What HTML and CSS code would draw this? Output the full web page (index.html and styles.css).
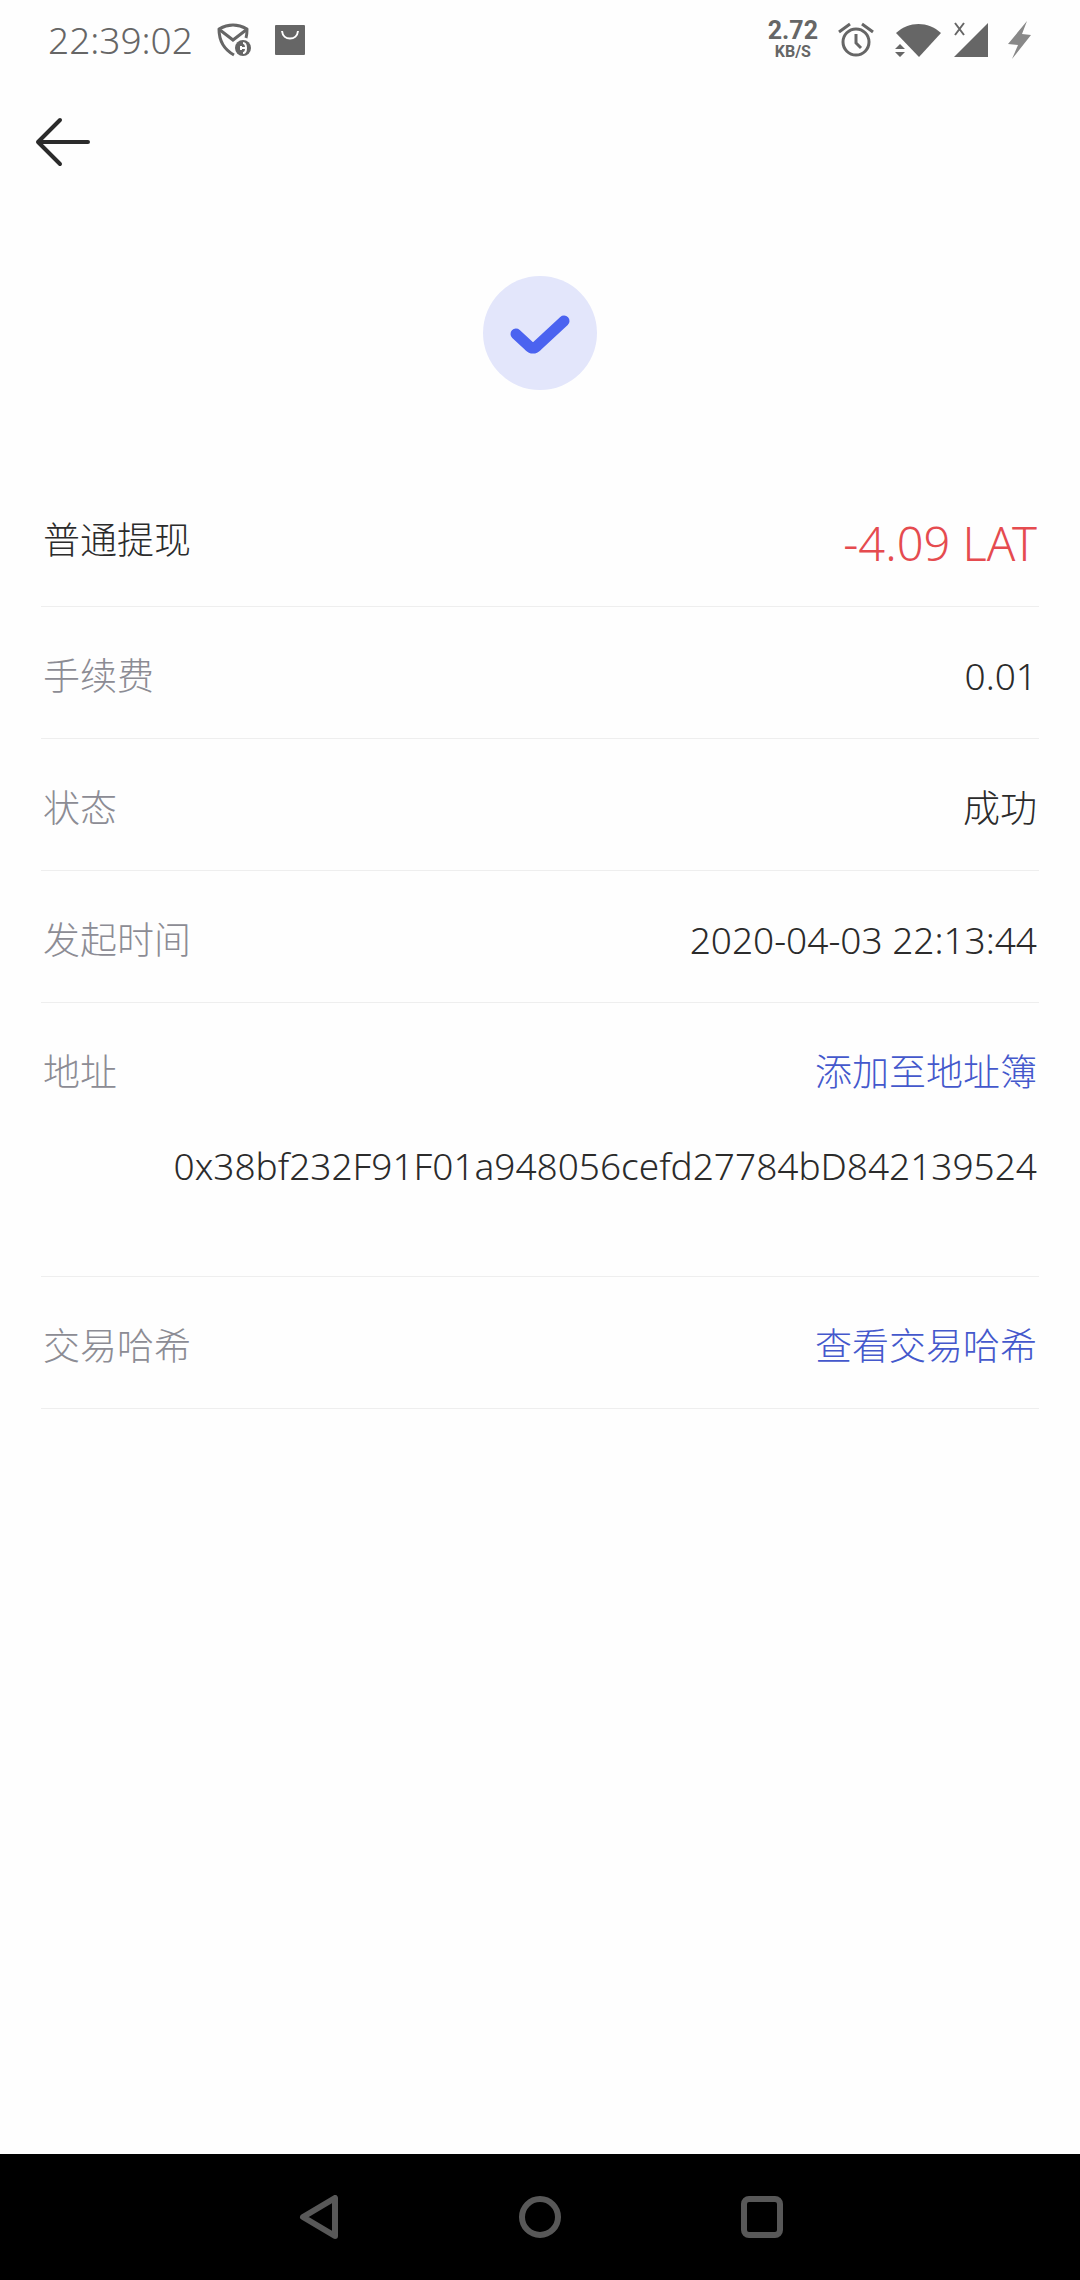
FILE: index.html
```html
<!DOCTYPE html>
<html lang="zh-CN">
<head>
    <meta charset="UTF-8">
    <meta name="viewport" content="width=device-width, initial-scale=1.0">
    <title>普通提现</title>
    <link rel="stylesheet" href="styles.css">
</head>
<body>

    <!-- Status Bar -->
    <div class="status-bar">
        <div class="status-left">
            <span class="clock">22:39:02</span>
            <svg width="34" height="36" viewBox="0 0 34 36" fill="none" stroke="#666" stroke-width="3">
                <path d="M17 33C8 28 2 19 2 7C11 2 21 2 30 7C30 11 30 13 29 16" stroke-linejoin="round"/>
                <path d="M3 8L16 18L29 8"/>
                <circle cx="26" cy="26" r="8" fill="#666" stroke="none"/>
                <path d="M26 21C30 21 30 31 26 31M24 26H28M24 24V28" stroke="#fff" stroke-width="2"/>
            </svg>
            <svg width="30" height="30" viewBox="0 0 30 30">
                <rect width="30" height="30" rx="1" fill="#666"/>
                <path d="M7 6C8 16 22 16 23 6" fill="none" stroke="#fff" stroke-width="2"/>
            </svg>
        </div>
        <div class="status-right">
            <div class="speed">
                <span class="speed-value">2.72</span>
                <span class="speed-unit">KB/S</span>
            </div>
            <svg width="36" height="36" viewBox="0 0 36 36" fill="none" stroke="#666" stroke-width="3">
                <circle cx="18" cy="20" r="13"/>
                <path d="M18 12V21L23 26M1 10L12 2M24 2L35 10"/>
            </svg>
            <div class="network">
                <svg width="48" height="36" viewBox="0 0 48 36" fill="#666">
                    <path d="M2 11C15 -1 34 -1 47 11L25 35Z"/>
                    <path d="M1 27L6 22L11 27ZM1 30H11L6 35Z"/>
                </svg>
                <svg width="36" height="36" viewBox="0 0 36 36" fill="#666">
                    <path d="M36 1V35H2Z"/>
                    <path d="M3 1L12 13M12 1L3 13" stroke="#666" stroke-width="2"/>
                </svg>
            </div>
            <svg width="24" height="40" viewBox="0 0 24 40" fill="#888">
                <path d="M19 1L0 24L10 25L4 39L23 15L14 14Z"/>
            </svg>
        </div>
    </div>

    <!-- Top Bar -->
    <header class="top-bar">
        <button class="back-button" aria-label="返回">
            <svg width="56" height="50" viewBox="0 0 56 50" fill="none" stroke="#2b2b2b" stroke-width="4" stroke-linecap="round" stroke-linejoin="round">
                <path d="M25 3L3 25L25 47M3 25H53"/>
            </svg>
        </button>
    </header>

    <!-- Main Content -->
    <main class="main-content">
        <div class="result">
            <svg width="114" height="114" viewBox="0 0 114 114">
                <circle cx="57" cy="57" r="57" fill="#e3e6fb"/>
                <path d="M33 58L46 70Q50 74 54 70L81 45" fill="none" stroke="#4b63f0" stroke-width="11" stroke-linecap="round" stroke-linejoin="round"/>
            </svg>
        </div>

        <div class="detail-list">
            <div class="row row-title">
                <span class="title">普通提现</span>
                <span class="amount">-4.09 LAT</span>
            </div>
            <div class="row">
                <span class="label">手续费</span>
                <span>0.01</span>
            </div>
            <div class="row">
                <span class="label">状态</span>
                <span>成功</span>
            </div>
            <div class="row">
                <span class="label">发起时间</span>
                <span>2020-04-03 22:13:44</span>
            </div>
            <div class="row row-address">
                <span class="label">地址</span>
                <a href="#" class="link">添加至地址簿</a>
                <span class="address">0x38bf232F91F01a948056cefd27784bD842139524</span>
            </div>
            <div class="row">
                <span class="label">交易哈希</span>
                <a href="#" class="link">查看交易哈希</a>
            </div>
        </div>
    </main>

    <!-- Navigation Bar -->
    <nav class="nav-bar">
        <button class="nav-button" aria-label="返回">
            <svg width="44" height="44" viewBox="0 0 44 44"><path d="M7 22L39 3V41Z"/></svg>
        </button>
        <button class="nav-button" aria-label="主页">
            <svg width="44" height="44" viewBox="0 0 44 44"><circle cx="22" cy="22" r="18"/></svg>
        </button>
        <button class="nav-button" aria-label="最近任务">
            <svg width="44" height="44" viewBox="0 0 44 44"><rect x="4" y="4" width="36" height="36" rx="5"/></svg>
        </button>
    </nav>

</body>
</html>
```

FILE: styles.css
```css
/* General Style */
* {
    box-sizing: border-box;
}
body {
    display: flex;
    flex-direction: column;
    min-height: 100vh;
    margin: 0;
    background-color: #fefefe;
    color: #2b2b2b;
    font-family: "Noto Sans", "Noto Sans CJK SC", sans-serif;
    font-size: 37px;
    font-weight: 300;
    line-height: 54px;
}
svg {
    display: block;
}
button {
    padding: 0;
    border: none;
    background: none;
    cursor: pointer;
}

/* Status Bar */
.status-bar {
    display: flex;
    justify-content: space-between;
    height: 80px;
    padding: 0 48px;
    color: #666;
}
.status-left, .status-right, .network {
    display: flex;
    align-items: center;
}
.status-left {
    gap: 24px;
}
.status-right {
    gap: 20px;
}
.network {
    gap: 10px;
}
.speed {
    display: flex;
    flex-direction: column;
    align-items: center;
    font-family: Roboto, sans-serif;
    font-weight: 700;
}
.speed-value {
    font-size: 25px;
    line-height: 24px;
}
.speed-unit {
    font-size: 16px;
    line-height: 18px;
}

/* Top Bar */
.top-bar {
    display: flex;
    align-items: center;
    height: 124px;
    padding: 0 35px;
}

/* Main Content */
.main-content {
    flex: 1;
}
.result {
    display: flex;
    justify-content: center;
    padding: 72px 0 85px;
}

/* Detail List */
.detail-list {
    padding: 0 41px;
}
.row {
    display: flex;
    flex-wrap: wrap;
    justify-content: space-between;
    padding: 42px 2px 35px;
    border-bottom: 1px solid #eee;
}
.row-title {
    padding: 38px 2px 33px;
}
.label {
    color: #8c8c94;
}
.amount {
    font-size: 47px;
    line-height: 60px;
    color: #e54b4f;
}
.link {
    color: #4458cc;
    text-decoration: none;
}
.row-address {
    row-gap: 40px;
    padding-bottom: 83px;
}
.address {
    width: 100%;
    text-align: right;
}

/* Navigation Bar */
.nav-bar {
    display: flex;
    justify-content: center;
    align-items: center;
    gap: 178px;
    height: 126px;
    background-color: #000;
}
.nav-button svg {
    fill: none;
    stroke: #585858;
    stroke-width: 6;
    stroke-linejoin: round;
}
```
